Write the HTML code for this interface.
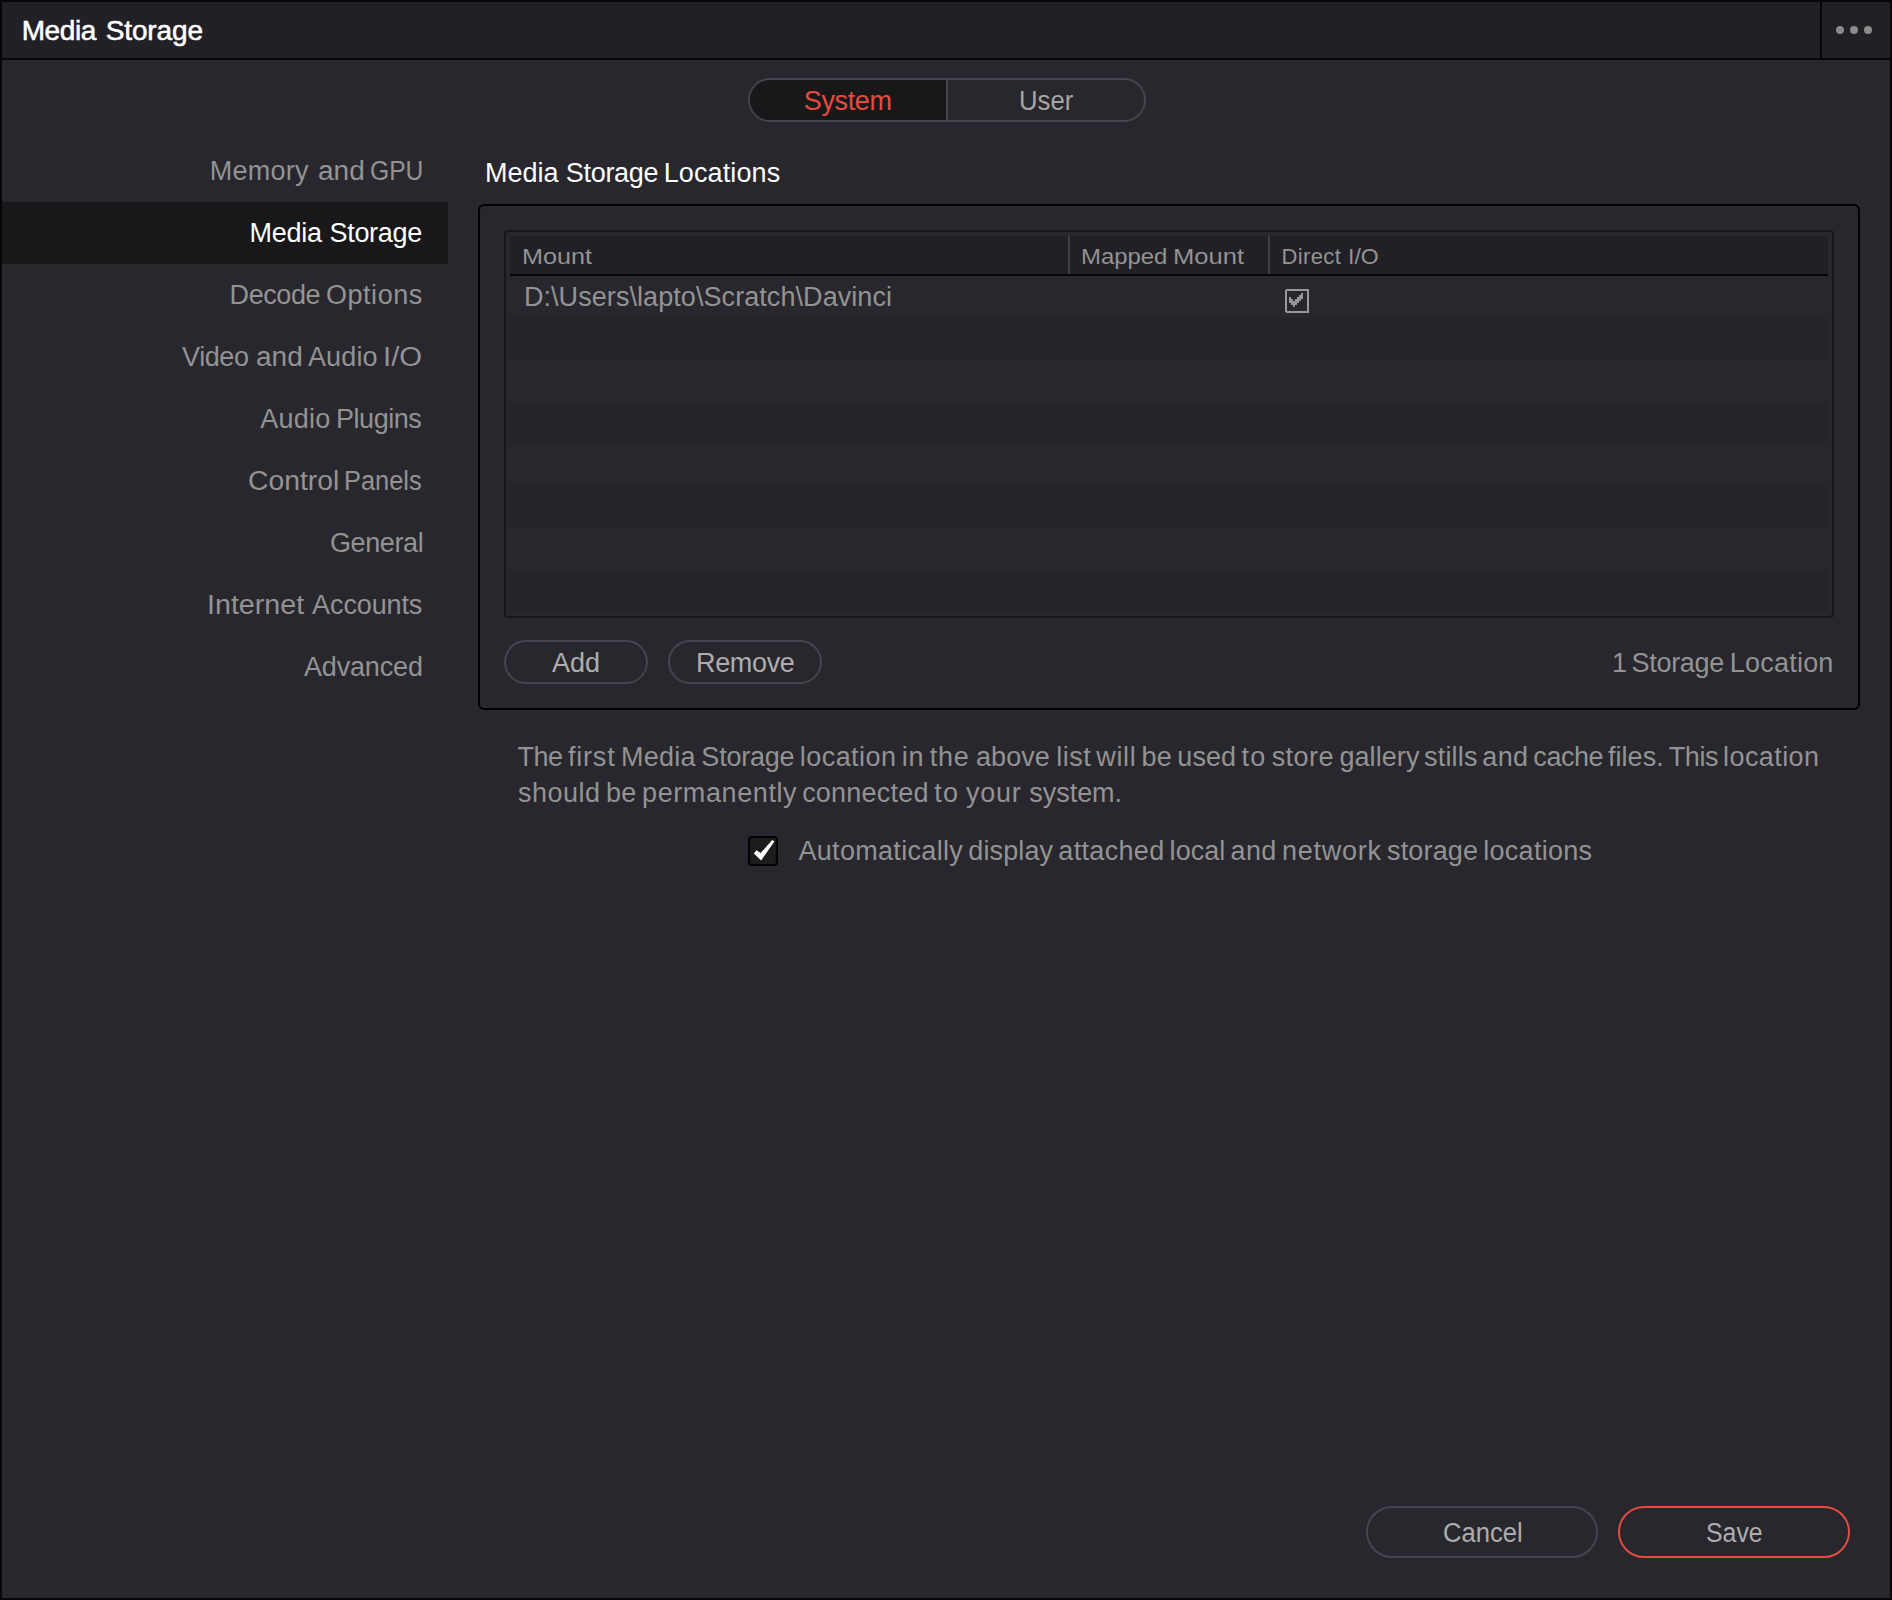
<!DOCTYPE html>
<html lang="en">
<head>
<meta charset="utf-8">
<title>Media Storage</title>
<style>
*{box-sizing:border-box;margin:0;padding:0}
html,body{width:1892px;height:1600px;overflow:hidden;background:#060606}
body{position:relative;font-family:"Liberation Sans","DejaVu Sans",sans-serif;font-size:27px;color:#939393}
.abs{position:absolute}
.t{position:absolute;white-space:nowrap;line-height:40px;height:40px}
#win{position:absolute;left:2px;top:2px;width:1888px;height:1596px;background:#28272d}
#hdr{position:absolute;left:2px;top:2px;width:1888px;height:56px;background:#212026}
#hdrline{position:absolute;left:2px;top:58px;width:1888px;height:2px;background:#060606}
#hdrsep{position:absolute;left:1820px;top:2px;width:2px;height:56px;background:#060606}
.dot{position:absolute;top:26px;width:8px;height:8px;border-radius:50%;background:#8b8b8b}
#tabs{position:absolute;left:748px;top:78px;width:398px;height:44px;border:2px solid #43464e;border-radius:22px;overflow:hidden}
#tabs .on{position:absolute;left:0;top:0;width:196px;height:40px;background:#18181a}
#tabs .div{position:absolute;left:196px;top:0;width:2px;height:40px;background:#43464e}
#sel{position:absolute;left:2px;top:202px;width:446px;height:62px;background:#18181b}
#panel{position:absolute;left:478px;top:204px;width:1382px;height:506px;border:2px solid #000;border-radius:6px}
#tbl{position:absolute;left:504px;top:230px;width:1330px;height:388px;border:2px solid #171718;border-radius:4px}
#th{position:absolute;left:510px;top:236px;width:1318px;height:38px;background:#212026}
#thline{position:absolute;left:510px;top:274px;width:1318px;height:2px;background:#060606}
.csep{position:absolute;top:236px;width:2px;height:38px;background:#3d3f46}
.stripe{position:absolute;left:510px;width:1318px;height:42px;background:#252429}
button.btn{position:absolute;border:2px solid #43464e;border-radius:26px;background:transparent;font:inherit;color:inherit;overflow:visible;text-align:left;cursor:pointer}
</style>
</head>
<body>
<div id="win"></div>
<header>
<div id="hdr"></div>
<div id="hdrline"></div>
<div id="hdrsep"></div>
<div class="t" style="left:21.7px;top:11.0px;font-size:28px;color:#ffffff;-webkit-text-stroke:0.55px #fff"><span style="letter-spacing:-0.425px">Media</span> <span style="letter-spacing:-0.133px;margin-left:2.08px">Storage</span></div>
<div class="dot" style="left:1836px"></div>
<div class="dot" style="left:1850px"></div>
<div class="dot" style="left:1864px"></div>
</header>
<div role="tablist">
<div id="tabs"><div class="on"></div><div class="div"></div></div>
<div class="t" style="left:803.8px;top:81.0px;font-size:27px;color:#e64b3d;letter-spacing:-0.380px;">System</div>
<div class="t" style="left:1018.8px;top:81.0px;font-size:27px;color:#a5a5a5;transform:scaleX(0.9509);transform-origin:0 0;">User</div>
</div>
<nav>
<div id="sel"></div>
<div class="t" style="left:209.7px;top:151.0px;font-size:27px;color:#939393;"><span style="letter-spacing:0.280px">Memory</span> <span style="display:inline-block;transform:scaleX(1.0405);transform-origin:0 50%;margin-left:1.25px">and</span> <span style="display:inline-block;transform:scaleX(0.9125);transform-origin:0 50%;margin-left:-0.65px">GPU</span></div>
<div class="t" style="left:249.4px;top:213.0px;font-size:27px;color:#ffffff;"><span style="letter-spacing:-0.250px">Media</span> <span style="letter-spacing:-0.333px;margin-left:0.39px">Storage</span></div>
<div class="t" style="left:229.6px;top:275.0px;font-size:27px;color:#939393;"><span style="letter-spacing:-0.420px">Decode</span> <span style="letter-spacing:0.567px;margin-left:-1.77px">Options</span></div>
<div class="t" style="left:182.1px;top:337.0px;font-size:27px;color:#939393;"><span style="letter-spacing:-0.425px">Video</span> <span style="display:inline-block;transform:scaleX(1.0381);transform-origin:0 50%;margin-left:-0.51px">and</span> <span style="letter-spacing:0.150px;margin-left:-0.24px">Audio</span> <span style="display:inline-block;transform:scaleX(1.0848);transform-origin:0 50%;margin-left:-2.10px">I/O</span></div>
<div class="t" style="left:260.3px;top:399.0px;font-size:27px;color:#939393;"><span style="letter-spacing:0.200px">Audio</span> <span style="letter-spacing:-0.450px;margin-left:-1.88px">Plugins</span></div>
<div class="t" style="left:248.2px;top:461.0px;font-size:27px;color:#939393;"><span style="display:inline-block;transform:scaleX(1.0476);transform-origin:0 50%">Control</span> <span style="display:inline-block;transform:scaleX(0.9400);transform-origin:0 50%;margin-left:1.51px">Panels</span></div>
<div class="t" style="left:330.0px;top:523.0px;font-size:27px;color:#939393;letter-spacing:-0.400px;">General</div>
<div class="t" style="left:207.1px;top:585.0px;font-size:27px;color:#939393;"><span style="display:inline-block;transform:scaleX(1.0611);transform-origin:0 50%">Internet</span> <span style="letter-spacing:-0.114px;margin-left:5.94px">Accounts</span></div>
<div class="t" style="left:303.9px;top:647.0px;font-size:27px;color:#939393;letter-spacing:-0.143px;">Advanced</div>
</nav>
<main>
<div class="t" style="left:484.9px;top:153.0px;font-size:27px;color:#ffffff;"><span style="letter-spacing:0.025px">Media</span> <span style="letter-spacing:-0.300px;margin-left:-0.29px">Storage</span> <span style="letter-spacing:0.112px;margin-left:-2.09px">Locations</span></div>
<section>
<div id="panel"></div>
<div id="tbl"></div>
<div id="th"></div>
<div id="thline"></div>
<div class="csep" style="left:1068px"></div>
<div class="csep" style="left:1268px"></div>
<div class="t" style="left:522.0px;top:237.0px;font-size:22px;color:#939393;transform:scaleX(1.1441);transform-origin:0 0;">Mount</div>
<div class="t" style="left:1081.2px;top:237.0px;font-size:22px;color:#939393;"><span style="display:inline-block;transform:scaleX(1.0868);transform-origin:0 50%">Mapped</span> <span style="display:inline-block;transform:scaleX(1.1627);transform-origin:0 50%;margin-left:5.81px">Mount</span></div>
<div class="t" style="left:1281.4px;top:237.0px;font-size:22px;color:#939393;"><span style="letter-spacing:0.380px">Direct</span> <span style="display:inline-block;transform:scaleX(1.0481);transform-origin:0 50%;margin-left:0.35px">I/O</span></div>
<div class="stripe" style="top:318px"></div>
<div class="stripe" style="top:402px"></div>
<div class="stripe" style="top:486px"></div>
<div class="stripe" style="top:570px"></div>
<div class="t" style="left:523.9px;top:277.0px;font-size:27px;color:#939393;letter-spacing:0.069px;">D:\Users\lapto\Scratch\Davinci</div>
<svg class="abs" style="left:1285px;top:289px" width="24" height="24" viewBox="0 0 24 24" shape-rendering="crispEdges"><rect x="1" y="1" width="22" height="22" fill="none" stroke="#989897" stroke-width="2"/><rect x="0" y="0" width="1" height="1" fill="#28272d"/><rect x="0" y="23" width="1" height="1" fill="#28272d"/><g fill="#959595"><rect x="4" y="8" width="2" height="6"/><rect x="6" y="10" width="2" height="6"/><rect x="8" y="12" width="2" height="6"/><rect x="10" y="10" width="2" height="6"/><rect x="12" y="8" width="2" height="6"/><rect x="14" y="6" width="2" height="6"/><rect x="16" y="4" width="2" height="6"/></g></svg>
<button class="btn" style="left:504px;top:640px;width:144px;height:44px"><div class="t" style="left:46.0px;top:1.0px;font-size:27px;color:#adadad;letter-spacing:0.000px;">Add</div></button>
<button class="btn" style="left:668px;top:640px;width:154px;height:44px"><div class="t" style="left:26.0px;top:1.0px;font-size:27px;color:#adadad;letter-spacing:-0.340px;">Remove</div></button>
<div class="t" style="left:1611.9px;top:643.0px;font-size:27px;color:#939393;"><span style="letter-spacing:0.000px">1</span> <span style="letter-spacing:-0.317px;margin-left:-2.85px">Storage</span> <span style="letter-spacing:0.214px;margin-left:-1.68px">Location</span></div>
</section>
<div class="t" style="left:517.5px;top:737.0px;font-size:27px;color:#939393;word-spacing:-2.259px;"><span style="letter-spacing:-0.534px">The</span> <span style="margin-left:0.20px;letter-spacing:0.816px">first</span> <span style="margin-left:0.20px;letter-spacing:0.296px">Media</span> <span style="margin-left:0.20px;letter-spacing:-0.217px">Storage</span> <span style="margin-left:0.20px;letter-spacing:0.432px">location</span> <span style="margin-left:0.20px;letter-spacing:0.759px">in</span> <span style="margin-left:0.20px;letter-spacing:0.726px">the</span> <span style="margin-left:1.30px;letter-spacing:0.026px">above</span> <span style="margin-left:1.30px;letter-spacing:0.434px">list</span> <span style="margin-left:0.03px;letter-spacing:0.613px">will</span> <span style="margin-left:0.03px;letter-spacing:0.236px">be</span> <span style="margin-left:0.03px;letter-spacing:0.080px">used</span> <span style="margin-left:0.03px;letter-spacing:1.176px">to</span> <span style="margin-left:0.03px;letter-spacing:0.491px">store</span> <span style="margin-left:0.03px;letter-spacing:0.080px">gallery</span> <span style="margin-left:-0.75px;letter-spacing:0.202px">stills</span> <span style="margin-left:-0.75px;letter-spacing:0.429px">and</span> <span style="margin-left:-0.45px;letter-spacing:-0.460px">cache</span> <span style="margin-left:-0.45px;letter-spacing:0.057px">files.</span> <span style="margin-left:-0.30px;letter-spacing:-0.424px">This</span> <span style="margin-left:-0.30px;letter-spacing:0.432px">location</span></div>
<div class="t" style="left:517.9px;top:773.0px;font-size:27px;color:#939393;word-spacing:-1.538px;"><span style="letter-spacing:0.492px">should</span> <span style="margin-left:-0.40px;letter-spacing:0.236px">be</span> <span style="margin-left:-0.40px;letter-spacing:0.590px">permanently</span> <span style="margin-left:-1.00px;letter-spacing:0.228px">connected</span> <span style="margin-left:-0.40px;letter-spacing:1.176px">to</span> <span style="margin-left:0.80px;letter-spacing:0.699px">your</span> <span style="margin-left:2.00px;letter-spacing:-0.041px">system.</span></div>
<svg class="abs" style="left:748px;top:836px" width="30" height="30" viewBox="0 0 30 30"><rect x="1" y="1" width="28" height="28" rx="3" fill="#1c1c1d" stroke="#030303" stroke-width="2.2"/><polygon points="8.4,14.3 12.5,17.05 24.3,4 26.4,5.6 13.1,24.5 5.9,17.5" fill="#fff"/></svg>
<div class="t" style="left:798.4px;top:831.0px;font-size:27px;color:#939393;word-spacing:-2.371px;"><span style="letter-spacing:0.320px">Automatically</span> <span style="letter-spacing:0.126px">display</span> <span style="letter-spacing:0.317px">attached</span> <span style="letter-spacing:0.033px">local</span> <span style="letter-spacing:0.429px">and</span> <span style="letter-spacing:0.766px">network</span> <span style="letter-spacing:0.161px">storage</span> <span style="letter-spacing:0.262px">locations</span></div>
</main>
<footer>
<button class="btn" style="left:1366px;top:1506px;width:232px;height:52px"><div class="t" style="left:75.2px;top:5.0px;font-size:27px;color:#adadad;transform:scaleX(0.9469);transform-origin:0 0;">Cancel</div></button>
<button class="btn" style="left:1618px;top:1506px;width:232px;height:52px;border-color:#e64b3d"><div class="t" style="left:85.9px;top:5.0px;font-size:27px;color:#adadad;transform:scaleX(0.9200);transform-origin:0 0;">Save</div></button>
</footer>
</body>
</html>
